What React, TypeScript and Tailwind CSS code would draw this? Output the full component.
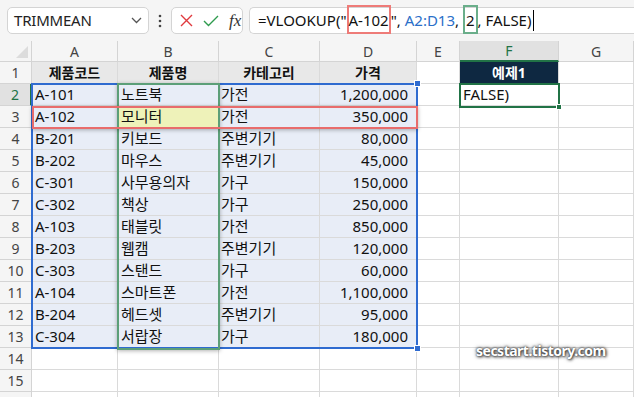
import React from "react";

const rows: [string, string, string, string][] = [
  ["A-101", "노트북", "가전", "1,200,000"],
  ["A-102", "모니터", "가전", "350,000"],
  ["B-201", "키보드", "주변기기", "80,000"],
  ["B-202", "마우스", "주변기기", "45,000"],
  ["C-301", "사무용의자", "가구", "150,000"],
  ["C-302", "책상", "가구", "250,000"],
  ["A-103", "태블릿", "가전", "850,000"],
  ["B-203", "웹캠", "주변기기", "120,000"],
  ["C-303", "스탠드", "가구", "60,000"],
  ["A-104", "스마트폰", "가전", "1,100,000"],
  ["B-204", "헤드셋", "주변기기", "95,000"],
  ["C-304", "서랍장", "가구", "180,000"],
];

const font = { fontFamily: '"Noto Sans", "Noto Sans CJK KR", sans-serif' };

const cell = "h-[22px] border-r border-b border-[#dadada] overflow-hidden whitespace-nowrap";
const rowHdr = "h-[22px] border-r border-b border-[#d4d4d4] bg-[#f5f5f5] flex items-center justify-center text-[14px] text-[#444]";

export default function App() {
  const letters = ["A", "B", "C", "D", "E", "F", "G"];
  const sheetRows: React.ReactNode[] = [];
  for (let r = 1; r <= 15; r++) {
    const isActive = r === 2;
    sheetRows.push(
      <div
        key={"h" + r}
        className={
          isActive
            ? "h-[22px] border-b border-[#d4d4d4] bg-[#e1e1e1] border-r-2 border-r-[#217346] flex items-center justify-center text-[14px] text-[#217346]"
            : rowHdr
        }
      >
        {r}
      </div>
    );
    if (r === 1) {
      ["제품코드", "제품명", "카테고리", "가격"].forEach((t, i) =>
        sheetRows.push(
          <div key={"r1" + i} className={cell + " bg-[#e8e8e8] font-bold text-[14px] flex items-center justify-center text-[#111]"}>
            {t}
          </div>
        )
      );
      sheetRows.push(<div key="r1e" className={cell} />);
      sheetRows.push(
        <div key="r1f" className={cell + " bg-[#0e2841] text-white font-bold text-[14px] flex items-center justify-center"}>
          예제1
        </div>
      );
      sheetRows.push(<div key="r1g" className={cell} />);
    } else if (r <= 13) {
      const d = rows[r - 2];
      sheetRows.push(
        <div key={"a" + r} className={cell + " bg-[#e8edf7] flex items-center pl-[3px] text-[15px] text-[#111]"}>{d[0]}</div>
      );
      sheetRows.push(
        <div key={"b" + r} className={cell + (r === 3 ? " bg-[#eef2b9]" : " bg-[#e8edf7]") + " flex items-center pl-[3px] text-[15px] text-[#111]"}>{d[1]}</div>
      );
      sheetRows.push(
        <div key={"c" + r} className={cell + " bg-[#e8edf7] flex items-center pl-[2px] text-[15px] text-[#111]"}>{d[2]}</div>
      );
      sheetRows.push(
        <div key={"d" + r} className={cell + " bg-[#e8edf7] flex items-center justify-end pr-[8px] text-[15px] text-[#111]"}>{d[3]}</div>
      );
      sheetRows.push(<div key={"e" + r} className={cell} />);
      sheetRows.push(
        <div key={"f" + r} className={cell + " flex items-center pl-[3px] text-[15px] text-[#111]"}>{r === 2 ? "FALSE)" : ""}</div>
      );
      sheetRows.push(<div key={"g" + r} className={cell} />);
    } else {
      for (let c = 0; c < 7; c++) sheetRows.push(<div key={"x" + r + c} className={cell} />);
    }
  }
  // partial row 16 (no number visible)
  sheetRows.push(<div key="h16" className="h-[22px] border-r border-[#d4d4d4] bg-[#f5f5f5]" />);
  for (let c = 0; c < 7; c++) sheetRows.push(<div key={"y" + c} className="h-[22px] border-r border-[#dadada]" />);

  return (
    <div className="relative w-[634px] h-[397px] overflow-hidden bg-white" style={font}>
      {/* formula bar */}
      <div className="h-[41px] bg-[#f5f5f5] flex items-start pt-[7px] pl-[7px]">
        <div className="w-[142px] h-[27px] bg-white border border-[#d4d4d4] rounded-[5px] flex items-center pl-[6px] pr-[6px] justify-between">
          <span className="text-[15px] text-[#222] tracking-[-0.2px]">TRIMMEAN</span>
          <svg width="11" height="7" viewBox="0 0 11 7">
            <path d="M1 1 L5.5 5.5 L10 1" fill="none" stroke="#555" strokeWidth="1.3" />
          </svg>
        </div>
        <div className="w-[22px] h-[27px] flex items-center justify-center">
          <svg width="4" height="14" viewBox="0 0 4 14">
            <circle cx="2" cy="2" r="1.3" fill="#444" />
            <circle cx="2" cy="7" r="1.3" fill="#444" />
            <circle cx="2" cy="12" r="1.3" fill="#444" />
          </svg>
        </div>
        <div className="w-[72px] h-[27px] bg-white border border-[#d4d4d4] rounded-[5px] flex items-center pl-[8px] gap-[10px]">
          <svg width="13" height="13" viewBox="0 0 13 13">
            <path d="M1 1 L12 12 M12 1 L1 12" stroke="#e0393e" strokeWidth="1.4" fill="none" />
          </svg>
          <svg width="16" height="12" viewBox="0 0 16 12">
            <path d="M1 6 L5.5 10.5 L15 1" stroke="#2e9b4e" strokeWidth="1.4" fill="none" />
          </svg>
          <span className="text-[17px] italic text-[#333] leading-none" style={{ fontFamily: '"Liberation Serif", serif' }}>fx</span>
        </div>
        <div className="ml-[6px] flex-1 h-[27px] bg-white border-l border-t border-b border-[#d4d4d4] rounded-l-[5px] flex items-center pl-[8px] text-[15px] text-[#111] whitespace-nowrap">
          <span>=VLOOKUP("</span>
          <span className="border-2 border-[#ee7b78] h-[29px] flex items-center -mt-[3px] pt-[3px]">A-102</span>
          <span>",&nbsp;</span>
          <span className="text-[#2b6fc9]">A2:D13</span>
          <span>,&nbsp;</span>
          <span className="border-2 border-[#6aae8a] h-[29px] flex items-center -mt-[3px] pt-[3px] px-[1px]">2</span>
          <span>, FALSE)</span>
          <span className="ml-[2px] w-[1px] h-[21px] bg-black" />
        </div>
      </div>

      {/* sheet */}
      <div className="relative grid grid-cols-[32px_86px_101px_101px_97px_43px_99px_1fr]">
        <div className="h-[21px] border-r border-b border-[#d4d4d4] bg-[#f5f5f5] flex items-end justify-end pr-[3px] pb-[3px]">
          <svg width="12" height="12" viewBox="0 0 12 12">
            <path d="M12 0 L12 12 L0 12 Z" fill="#dcdcdc" />
          </svg>
        </div>
        {letters.map((l) =>
          l === "F" ? (
            <div key={l} className="h-[21px] border-r border-[#d4d4d4] bg-[#e1e1e1] border-b-2 border-b-[#217346] flex items-center justify-center text-[14px] text-[#217346]">
              {l}
            </div>
          ) : (
            <div key={l} className="h-[21px] border-r border-b border-[#d4d4d4] bg-[#f5f5f5] flex items-center justify-center text-[14px] text-[#444]">
              {l}
            </div>
          )
        )}
        {sheetRows}

        {/* blue range border A2:D13 with handles */}
        <div className="absolute left-[31px] top-[42px] w-[387px] h-[266px] border-2 border-[#2f6bd0] pointer-events-none">
          <div className="absolute -right-[5px] -top-[5px] w-[7px] h-[7px] bg-[#2f6bd0] border border-white" />
          <div className="absolute -right-[5px] -bottom-[5px] w-[7px] h-[7px] bg-[#2f6bd0] border border-white" />
        </div>

        {/* green box B2:B13 */}
        <div className="absolute left-[117px] top-[42px] w-[103px] h-[267px] border-2 border-[#5c9f78] shadow-[0_1px_4px_rgba(0,0,0,0.3)] pointer-events-none" />

        {/* red box A3:D3 */}
        <div className="absolute left-[32px] top-[65px] w-[386px] h-[23px] border-2 border-[#e86c6c] shadow-[0_1px_4px_rgba(0,0,0,0.3)] pointer-events-none" />

        {/* active cell F2 */}
        <div className="absolute left-[459px] top-[42px] w-[101px] h-[25px] border-2 border-[#217346] pointer-events-none">
          <div className="absolute -right-[4px] -bottom-[4px] w-[6px] h-[6px] bg-[#217346] border border-white" />
        </div>
      </div>

      {/* watermark */}
      <div className="absolute left-[476px] top-[340px] text-[14px] font-bold text-white tracking-[-0.5px] [text-shadow:0_0_2px_#222,1px_1px_3px_#444,0_0_4px_#666]">
        secstart.tistory.com
      </div>
    </div>
  );
}
